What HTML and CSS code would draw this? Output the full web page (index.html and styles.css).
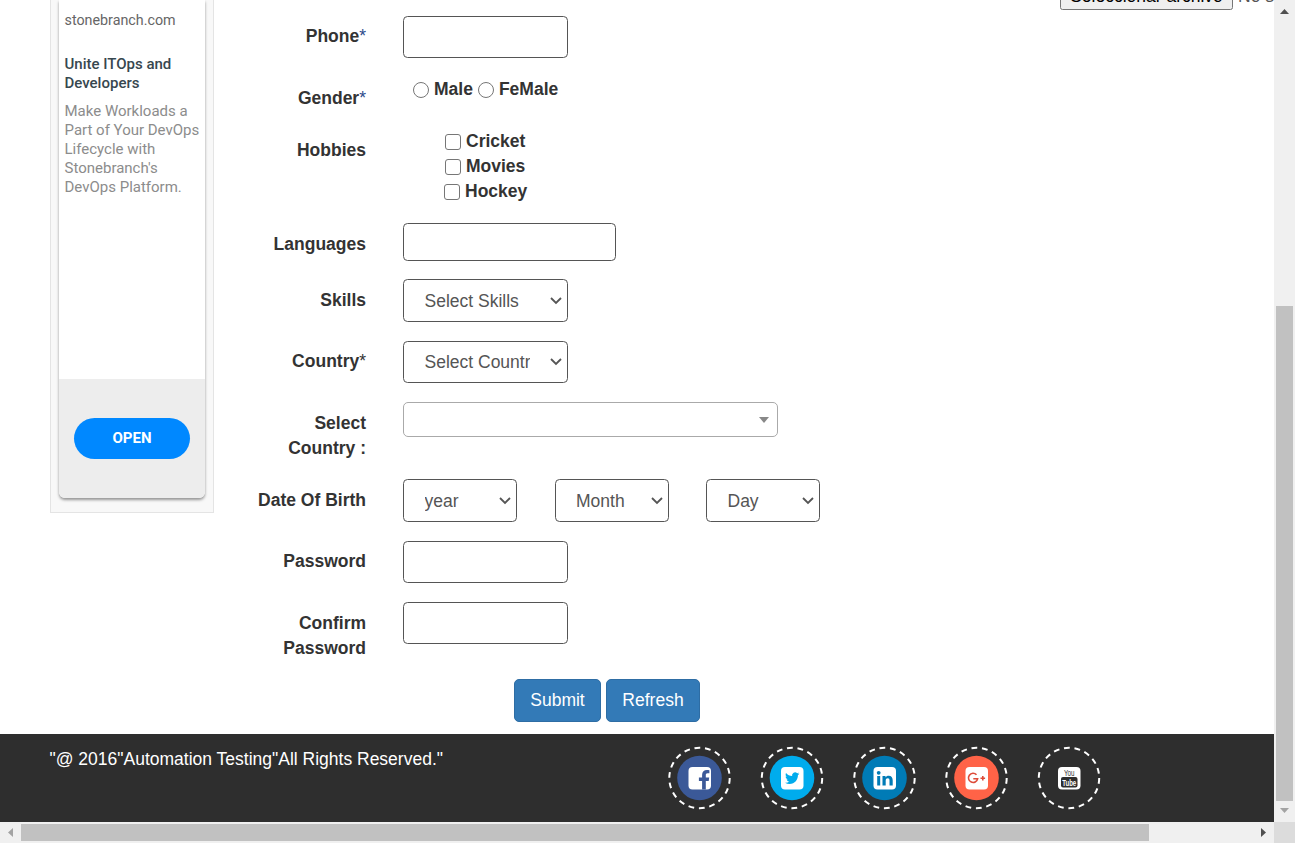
FILE: index.html
```html
<!DOCTYPE html>
<html lang="en">
<head>
<meta charset="utf-8">
<title>Register</title>
<link rel="stylesheet" href="styles.css">
</head>
<body>
<div class="window">
  <div class="viewport">
    <main class="main">
      <aside class="ad">
        <div class="ad-card">
          <div class="ad-copy">
            <p class="ad-url">stonebranch.com</p>
            <h2 class="ad-title">Unite ITOps and<br>Developers</h2>
            <p class="ad-text">Make Workloads a<br>Part of Your DevOps<br>Lifecycle with<br>Stonebranch's<br>DevOps Platform.</p>
          </div>
          <div class="ad-action"><a class="ad-open">OPEN</a></div>
        </div>
      </aside>
      <form class="form">
        <div class="row row-phone"><label class="label">Phone<span class="star">*</span></label><input class="control" type="tel"></div>
        <div class="row row-gender"><label class="label">Gender<span class="star">*</span></label>
          <div class="radios"><input class="tick radio" type="radio" name="g"><span class="male">Male</span><input class="tick radio" type="radio" name="g"><span>FeMale</span></div>
        </div>
        <div class="row row-hobbies"><label class="label">Hobbies</label>
          <div class="checks">
            <div class="check"><input class="tick" type="checkbox"><span>Cricket</span></div>
            <div class="check"><input class="tick" type="checkbox"><span>Movies</span></div>
            <div class="check check-last"><input class="tick" type="checkbox"><span>Hockey</span></div>
          </div>
        </div>
        <div class="row row-languages"><label class="label low">Languages</label><div class="control languages"></div></div>
        <div class="row row-skills"><label class="label low">Skills</label>
          <div class="control select tall"><span class="value">Select Skills</span><svg class="chevron" viewBox="0 0 12 8"><path d="M1 1l5 5 5-5"/></svg></div></div>
        <div class="row row-country"><label class="label">Country<span class="star dark">*</span></label>
          <div class="control select"><span class="value">Select Country</span><svg class="chevron" viewBox="0 0 12 8"><path d="M1 1l5 5 5-5"/></svg></div></div>
        <div class="row row-select-country"><label class="label low">Select<br>Country :</label>
          <div class="combo"><svg class="caret" viewBox="0 0 10 6"><path d="M0 0h10L5 6z"/></svg></div></div>
        <div class="row row-birth"><label class="label low">Date Of Birth</label>
          <div class="dates">
            <div class="control select tall date"><span class="value">year</span><svg class="chevron" viewBox="0 0 12 8"><path d="M1 1l5 5 5-5"/></svg></div>
            <div class="control select tall date"><span class="value">Month</span><svg class="chevron" viewBox="0 0 12 8"><path d="M1 1l5 5 5-5"/></svg></div>
            <div class="control select tall date"><span class="value">Day</span><svg class="chevron" viewBox="0 0 12 8"><path d="M1 1l5 5 5-5"/></svg></div>
          </div></div>
        <div class="row row-password"><label class="label">Password</label><input class="control" type="password"></div>
        <div class="row row-confirm"><label class="label low">Confirm<br>Password</label><input class="control" type="password"></div>
        <div class="buttons"><button class="btn submit" type="button">Submit</button><button class="btn refresh" type="button">Refresh</button></div>
      </form>
      <div class="upload"><span class="file-btn">Seleccionar archivo</span><span class="file-name">No se eligió</span></div>
    </main>
    <footer class="footer">
      <p class="copyright">"@ 2016"Automation Testing"All Rights Reserved."</p>
      <div class="social">
        <svg class="badge" viewBox="0.5 0 64 64"><circle class="ring" cx="32" cy="32" r="30.2"/><circle cx="32" cy="32" r="22.3" fill="#3b5998"/><rect class="tile" x="21" y="21" width="22.5" height="22.5" rx="4"/><path fill="#3b5998" d="M34.6 43.5V35h-3.2v-3.5h3.2v-2.7c0-3.2 2-4.8 4.8-4.8 1.2 0 2.2.1 2.5.2v3h-1.800c-1.400 0-1.800.8-1.800 1.800v2.500h3.400l-.5 3.500h-2.900v8.500z"/></svg>
        <svg class="badge" viewBox="0 0 64 64"><circle class="ring" cx="32" cy="32" r="30.2"/><circle cx="32" cy="32" r="22.3" fill="#00aced"/><rect class="tile" x="21" y="21" width="22.5" height="22.5" rx="4"/><path fill="#00aced" transform="translate(25 25) scale(.6)" d="M24 4.600c-.9.400-1.800.7-2.800.8 1-.6 1.800-1.600 2.200-2.700-1 .6-2 1-3.100 1.200A4.900 4.900 0 0 0 11.900 8.400C7.800 8.200 4.200 6.200 1.700 3.200c-1.300 2.200-.7 5.100 1.500 6.600-.8 0-1.600-.2-2.200-.6 0 2.300 1.600 4.400 3.900 4.900-.7.200-1.500.2-2.200.1.600 2 2.400 3.400 4.600 3.400A9.900 9.900 0 0 1 0 19.500 14 14 0 0 0 7.500 21.700c9.100 0 14.300-7.700 14-14.600 1-.7 1.800-1.600 2.500-2.500z"/></svg>
        <svg class="badge" viewBox="-0.5 0 64 64"><circle class="ring" cx="32" cy="32" r="30.2"/><circle cx="32" cy="32" r="22.3" fill="#007bb6"/><rect class="tile" x="21" y="21" width="22.5" height="22.5" rx="4"/><g fill="#007bb6"><circle cx="26.2" cy="26.8" r="1.9"/><path d="M24.700 30h3v9.500h-3zM30 30h3v1.400c.6-1 1.700-1.700 3.200-1.700 2.700 0 4 1.700 4 4.600v5.200h-3.200v-5c0-1.400-.5-2.300-1.700-2.300-1.300 0-2.100.9-2.100 2.300v5H30z"/></g></svg>
        <svg class="badge" viewBox="-1 0 64 64"><circle class="ring" cx="31.5" cy="32" r="30.2"/><circle cx="31.5" cy="32" r="22.3" fill="#ff6347"/><rect class="tile" x="20.5" y="21" width="22.5" height="22.5" rx="4"/><path fill="none" stroke="#dd4b39" stroke-width="1.6" d="M31.500 28.800a4.600 4.600 0 1 0 1.100 4H28.300M35.500 32.200h4.600M37.800 29.900v4.600"/></svg>
        <svg class="badge" viewBox="-1 0 64 64"><circle class="ring" cx="32" cy="32" r="30.2"/><rect class="tile" x="21" y="21" width="22.5" height="22.5" rx="4"/><rect x="24" y="31" width="16.5" height="10.5" rx="2" fill="#2e2e2e"/><text class="you" x="27" y="30" textLength="10.5" lengthAdjust="spacingAndGlyphs">You</text><text class="tube" x="25.2" y="39.7" textLength="14" lengthAdjust="spacingAndGlyphs">Tube</text></svg>
      </div>
    </footer>
  </div>
  <div class="vbar"><svg class="arrow-v" viewBox="0 0 9 5"><path fill="#505050" d="M0 5h9L4.500 0z"/></svg><div class="vthumb"></div><svg class="arrow-v down" viewBox="0 0 9 5"><path fill="#a3a3a3" d="M0 0h9L4.500 5z"/></svg></div>
  <div class="hbar"><svg class="arrow-h" viewBox="0 0 5 9"><path fill="#a3a3a3" d="M5 0v9L0 4.500z"/></svg><div class="hthumb"></div><svg class="arrow-h right" viewBox="0 0 5 9"><path fill="#505050" d="M0 0v9l5-4.500z"/></svg></div>
  <div class="corner"></div>
</div>
</body>
</html>
```
FILE: styles.css
```css
* { box-sizing: border-box; }
body { margin: 0; font: 17.5px/25px "Liberation Sans", Arial, sans-serif; color: #333; background: #fff; overflow: hidden; }
p, h2 { margin: 0; }
.window { display: grid; grid-template: 822px 21px / 1274px 21px; width: 1295px; height: 843px; }
.viewport { overflow: hidden; }
.main { display: flex; align-items: flex-start; height: 734px; }

.ad { flex: none; width: 164px; height: 513px; margin-left: 50px; padding: 0 8px 14px; background: #f8f8f8; border: 1px solid #e4e4e4; border-top: 0; }
.ad-card { display: flex; flex-direction: column; height: 498px; background: #fff; border-radius: 0 0 6px 6px; box-shadow: 0 2px 3px rgba(0,0,0,.4); overflow: hidden; font-family: Roboto, sans-serif; font-size: 15px; line-height: 19px; }
.ad-copy { flex: 1; padding: 11px 0 0 5.5px; white-space: nowrap; }
.ad-url { color: #666; font-size: 14.3px; }
.ad-title { margin-top: 25px; font-size: 15px; font-weight: 500; color: #37474f; }
.ad-text { margin-top: 9px; color: #8c8c8c; }
.ad-action { display: flex; justify-content: center; height: 119px; padding-top: 39px; background: #ededed; }
.ad-open { width: 116px; height: 41px; border-radius: 21px; background: #0088ff; color: #fff; font-weight: 700; font-size: 15px; line-height: 41px; text-align: center; }

.form { flex: none; width: 720px; padding-top: 16px; }
.row { display: grid; grid-template-columns: 152px 1fr; column-gap: 37px; align-items: start; }
.row-phone { height: 62px; }
.row-gender { height: 52px; }
.row-hobbies { height: 93px; }
.row-languages { height: 56px; }
.row-skills { height: 62px; }
.row-country { height: 61px; }
.row-select-country { height: 77px; }
.row-birth { height: 62px; }
.row-password { height: 61px; }
.row-confirm { height: 77px; }
.label { padding-top: 8px; text-align: right; font-weight: 700; white-space: nowrap; }
.low { padding-top: 9px; }
.star { font-weight: 400; color: #2b4a8b; }
.dark { color: #333; }
.control { width: 165px; height: 42px; margin: 0; border: 1px solid #555; border-radius: 4.5px; background: #fff; }
.languages { width: 213px; height: 38px; }
.tall { height: 43px; }
.select { display: flex; align-items: center; justify-content: space-between; padding: 0 5px 0 20.5px; color: #555; }
.value { flex: 0 1 105px; overflow: hidden; white-space: nowrap; line-height: 41px; }
.tall .value { padding-top: 1px; }
.date .value { flex: 1; }
.chevron { flex: none; width: 12px; height: 8px; fill: none; stroke: #555; stroke-width: 1.8; }
.date { width: 114px; }
.dates { display: flex; gap: 37.5px; }
.combo { display: flex; align-items: center; justify-content: flex-end; width: 375px; height: 35px; padding-right: 8px; border: 1px solid #aaa; border-radius: 5px; }
.caret { width: 10px; height: 6px; fill: #888; }
.radios, .check { display: flex; align-items: center; font-weight: 700; }
.radios { padding-left: 10px; margin-top: -1px; }
.tick { appearance: none; flex: none; width: 16px; height: 16px; margin: 0 5px 0 0; border: 1px solid #767676; border-radius: 3px; background: #fff; }
.radio { border-radius: 50%; }
.male { margin-right: 5px; }
.checks { padding-left: 42px; margin-top: -1px; }
.check-last { margin-left: -1px; }
.buttons { display: flex; gap: 5px; padding-left: 300px; }
.btn { height: 43px; padding: 0; border: 1px solid #2e6da4; border-radius: 5px; background: #337ab7; color: #fff; font: inherit; }
.submit { width: 87px; }
.refresh { width: 94px; }

.upload { display: flex; flex: none; margin: -18px 0 0 126px; white-space: nowrap; color: #555; }
.file-btn { flex: none; width: 173px; height: 28px; margin-right: 5px; border: 1px solid #767676; border-radius: 2.5px; background: #efefef; color: #000; text-align: center; line-height: 26px; }
.file-name { line-height: 28px; }

.footer { display: flex; height: 88px; background: #2e2e2e; color: #fff; }
.copyright { width: 617px; padding: 13px 0 0 49.5px; white-space: nowrap; }
.social { display: flex; gap: 28px; padding: 12px 0 0 51px; }
.badge { flex: none; width: 64px; height: 64px; overflow: visible; }
.ring { fill: none; stroke: #fff; stroke-width: 2; stroke-dasharray: 5.8 4.742; }
.tile { fill: #fff; }
.you { font: 400 9px "Liberation Sans", sans-serif; fill: #333; }
.tube { font: 700 9px "Liberation Sans", sans-serif; fill: #fff; }

.vbar { display: flex; flex-direction: column; align-items: center; background: #f0f0f0; padding-top: 9px; }
.arrow-v { width: 9px; height: 5px; }
.vthumb { width: 17px; height: 495px; margin-top: 292px; background: #c1c1c1; }
.down { margin-top: 7px; }
.hbar { display: flex; align-items: center; background: #f0f0f0; padding-left: 8px; }
.arrow-h { width: 5px; height: 9px; }
.hthumb { width: 1128px; height: 17px; margin-left: 8px; background: #c1c1c1; }
.right { margin-left: 112px; }
.corner { background: #dcdcdc; }
```
